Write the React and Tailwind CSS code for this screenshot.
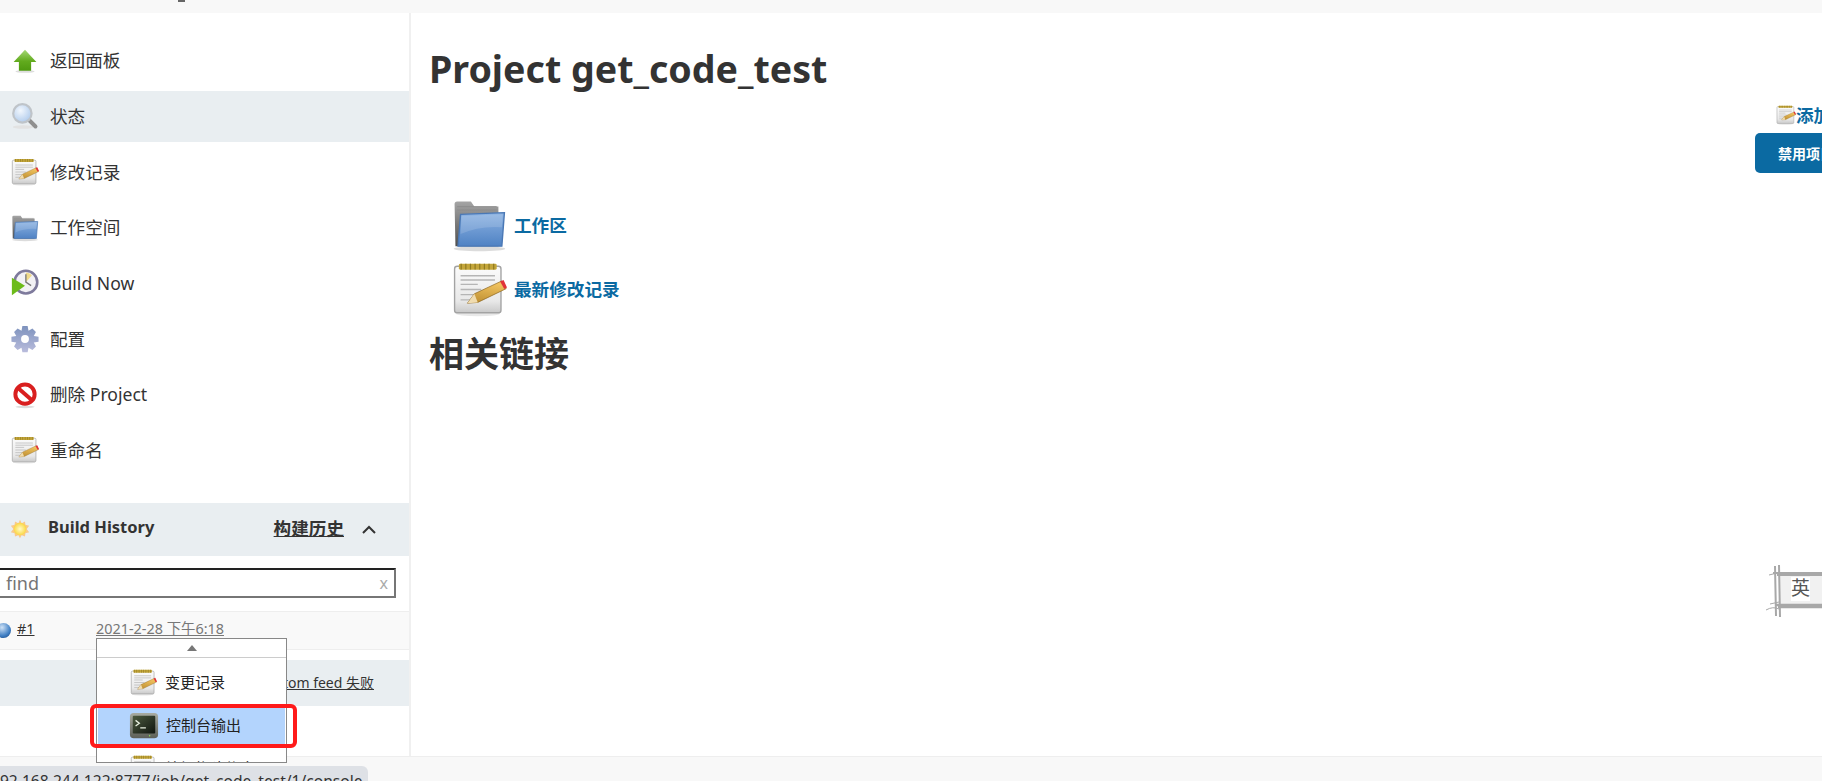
import React from "react";

const Defs = () => (
  <svg width="0" height="0" className="absolute">
    <defs>
      <linearGradient id="gArrow" x1="0" y1="0" x2="0" y2="1">
        <stop offset="0" stopColor="#a6d977" />
        <stop offset="0.55" stopColor="#62ab1e" />
        <stop offset="1" stopColor="#4f9a10" />
      </linearGradient>
      <radialGradient id="gLens" cx="0.4" cy="0.35" r="0.75">
        <stop offset="0" stopColor="#f2f7fd" />
        <stop offset="1" stopColor="#a9c6ea" />
      </radialGradient>
      <linearGradient id="gPaper" x1="0" y1="0" x2="0" y2="1">
        <stop offset="0" stopColor="#fbfbfb" />
        <stop offset="0.75" stopColor="#e8e8e8" />
        <stop offset="1" stopColor="#c9c9c9" />
      </linearGradient>
      <linearGradient id="gPencil" x1="0" y1="1" x2="0.3" y2="0">
        <stop offset="0" stopColor="#b98a2e" />
        <stop offset="1" stopColor="#f0c25e" />
      </linearGradient>
      <linearGradient id="gFolder" x1="0" y1="0" x2="0" y2="1">
        <stop offset="0" stopColor="#8db3e2" />
        <stop offset="1" stopColor="#4f82c4" />
      </linearGradient>
      <linearGradient id="gBack" x1="0" y1="0" x2="0" y2="1">
        <stop offset="0" stopColor="#a5a5a5" />
        <stop offset="1" stopColor="#4f4f4f" />
      </linearGradient>
      <linearGradient id="gGear" x1="0" y1="0" x2="0" y2="1">
        <stop offset="0" stopColor="#7d92bd" />
        <stop offset="1" stopColor="#b9bcdc" />
      </linearGradient>
      <radialGradient id="gSun" cx="0.5" cy="0.5" r="0.5">
        <stop offset="0" stopColor="#fffcc8" />
        <stop offset="1" stopColor="#fbd744" />
      </radialGradient>
      <linearGradient id="gTerm" x1="0" y1="0" x2="0" y2="1">
        <stop offset="0" stopColor="#a9aca2" />
        <stop offset="1" stopColor="#5d6058" />
      </linearGradient>
      <linearGradient id="gScreen" x1="0" y1="0" x2="1" y2="1">
        <stop offset="0" stopColor="#4c5a3f" />
        <stop offset="1" stopColor="#111610" />
      </linearGradient>
    </defs>
  </svg>
);

const UpArrow = ({ className }) => (
  <svg viewBox="0 0 32 32" className={className}>
    <ellipse cx="16" cy="28" rx="11" ry="1.5" fill="#ddd" />
    <path d="M16 3 L29 17 H23 V27 H9 V17 H3 Z" fill="url(#gArrow)" />
  </svg>
);

const Magnifier = ({ className }) => (
  <svg viewBox="0 0 32 32" className={className}>
    <ellipse cx="14" cy="28.5" rx="12" ry="2" fill="#e2e2e2" />
    <path d="M20 20 L28 28" stroke="#8f8f8f" strokeWidth="4.5" strokeLinecap="round" />
    <circle cx="13" cy="13" r="10.5" fill="url(#gLens)" stroke="#bfc4c9" strokeWidth="2.5" />
  </svg>
);

const Notepad = ({ className }) => (
  <svg viewBox="0 0 32 32" className={className}>
    <ellipse cx="15" cy="30" rx="13" ry="1.5" fill="#e8e8e8" />
    <rect x="1.5" y="2.5" width="27" height="27" rx="1.5" fill="url(#gPaper)" stroke="#a3a3a3" strokeWidth="0.8" />
    <rect x="4" y="1" width="22" height="3.5" rx="0.8" fill="#c4a63a" />
    <path d="M5 2.7 H25" stroke="#8f7a22" strokeWidth="3.4" strokeDasharray="0.7 2" />
    <path d="M5 8 H25 M5 10.5 H25 M5 13 H15 M5 16 H17 M5 19 H14 M5 22 H11" stroke="#b5b5b5" strokeWidth="0.8" />
    <path d="M9 24 L13 18.5 L29 11 L31.5 15.5 L15 23.5 Z" fill="url(#gPencil)" stroke="#8a6420" strokeWidth="0.4" />
    <path d="M9 24 L13 18.5 L15 23.5 Z" fill="#f0dcb0" />
    <path d="M28 11.4 L30 10.5 L32 14.8 L30.4 15.7 Z" fill="#e0343a" />
  </svg>
);

const Folder = ({ className }) => (
  <svg viewBox="0 0 32 32" className={className}>
    <ellipse cx="16" cy="29.5" rx="15" ry="1.5" fill="#dcdcdc" />
    <path d="M1.5 3.5 Q1.5 2 3 2 H11 L13 5 H27 V28 H2 Z" fill="url(#gBack)" />
    <path d="M3 5 H26 M3 7 H26" stroke="#8c8c8c" strokeWidth="0.5" />
    <path d="M5 9.5 L30.5 8.5 L29 28 H3.5 Z" fill="url(#gFolder)" stroke="#4a78b5" strokeWidth="0.8" />
    <path d="M5.5 10.5 L29.5 9.5 L29 17 Q16 16 5 21 Z" fill="#fff" opacity="0.14" />
  </svg>
);

const ClockPlay = ({ className }) => (
  <svg viewBox="0 0 32 32" className={className}>
    <circle cx="17" cy="15" r="13" fill="#f2f1f5" stroke="#7e7a9c" strokeWidth="3" />
    <path d="M17 4 A11 11 0 0 1 24 7 L17 15 Z" fill="#efd98a" />
    <path d="M17 6 L17 15 L23 19" stroke="#777" strokeWidth="1.5" fill="none" />
    <path d="M1 10 L16 19 L1 30 Z" fill="#6cbb1a" />
  </svg>
);

const Gear = ({ className }) => (
  <svg viewBox="0 0 32 32" className={className}>
    <path
      d="M13 1 H19 L20 6.5 L24.5 4 L28.5 8 L26 12.5 L31.5 13.5 V19 L26 20 L28.5 24.5 L24.5 28.5 L20 26 L19 31 H13 L12 26 L7.5 28.5 L3.5 24.5 L6 20 L0.5 19 V13.5 L6 12.5 L3.5 8 L7.5 4 L12 6.5 Z"
      fill="url(#gGear)"
    />
    <circle cx="16" cy="16" r="4.5" fill="#fff" />
  </svg>
);

const NoEntry = ({ className }) => (
  <svg viewBox="0 0 32 32" className={className}>
    <ellipse cx="16" cy="29.5" rx="11" ry="1.5" fill="#ddd" />
    <circle cx="16" cy="15" r="11" fill="#fff" stroke="#d91f1f" strokeWidth="4.5" />
    <path d="M8 8 L24 22" stroke="#d91f1f" strokeWidth="4.5" />
  </svg>
);

const Sun = ({ className }) => (
  <svg viewBox="0 0 24 24" className={className}>
    <path
      d="M12 1 L14 5 L18 3 L18.5 7 L23 8 L20 12 L23 16 L18.5 17 L18 21 L14 19.5 L12 23 L10 19.5 L6 21 L5.5 17 L1 16 L4 12 L1 8 L5.5 7 L6 3 L10 5 Z"
      fill="#f9c98a"
    />
    <circle cx="12" cy="12" r="7.5" fill="url(#gSun)" />
  </svg>
);

const Terminal = ({ className }) => (
  <svg viewBox="0 0 32 32" className={className}>
    <rect x="1" y="2" width="30" height="27" rx="4" fill="url(#gTerm)" />
    <rect x="4" y="5" width="24" height="19" rx="1" fill="url(#gScreen)" />
    <path d="M7 10 L11 13 L7 16 M12 18 H18" stroke="#e8f0e0" strokeWidth="1.4" fill="none" />
    <circle cx="22" cy="26.5" r="0.8" fill="#8fdc5a" />
  </svg>
);

const sideItems = [
  { Icon: UpArrow, label: "返回面板" },
  { Icon: Magnifier, label: "状态", active: true },
  { Icon: Notepad, label: "修改记录" },
  { Icon: Folder, label: "工作空间" },
  { Icon: ClockPlay, label: "Build Now" },
  { Icon: Gear, label: "配置" },
  { Icon: NoEntry, label: "删除 Project" },
  { Icon: Notepad, label: "重命名" },
];

const Sidebar = () => (
  <aside className="w-[411px] shrink-0 border-r-2 border-[#f0f0f0] pt-[22px]">
    <div className="flex flex-col gap-[4.7px]">
      {sideItems.map(({ Icon, label, active }) => (
        <div
          key={label}
          className={`flex h-[51px] items-center pl-[11px] text-[17.6px] text-[#333] ${active ? "bg-[#e9eef1]" : ""}`}
        >
          <Icon className="h-[28px] w-[28px] shrink-0" />
          <span className="ml-[11px]">{label}</span>
        </div>
      ))}
    </div>

    <div className="mt-[27px] flex h-[53px] items-center bg-[#e9eef1] pb-[3px] pl-[10px] text-[#333]">
      <Sun className="mt-[3px] h-[20px] w-[20px]" />
      <span className="ml-[18px] text-[16.5px] font-bold">Build History</span>
      <span className="ml-auto text-[17.6px] font-bold underline">构建历史</span>
      <svg viewBox="0 0 14 9" className="ml-[18px] mr-[33px] mt-[3px] h-[9px] w-[14px]">
        <path d="M1 8 L7 2 L13 8" stroke="#333" strokeWidth="2" fill="none" />
      </svg>
    </div>

    <div className="pt-[12px]">
      <div className="-ml-[2px] flex h-[30px] w-[398px] items-center border-2 border-[#767676] border-l-[#222] border-t-[#222] pl-[6px] pr-[6px] pt-[1px] text-[18px] text-[#757575]">
        <span>find</span>
        <span className="ml-auto text-[16px] text-[#aaa]">x</span>
      </div>
    </div>

    <div className="mt-[13px] flex h-[39px] items-center border-y border-[#eee] bg-[#f9f9f9] pb-[3px] text-[14.4px]">
      <span className="-ml-[4px] mt-[3px] h-[15px] w-[15px] shrink-0 rounded-full bg-[radial-gradient(circle_at_40%_30%,#cfe2f6,#3f7fc4_60%,#163f78)]" />
      <span className="ml-[6px] w-[79px] text-[#333] underline">#1</span>
      <span className="text-[#777] underline">2021-2-28 下午6:18</span>
    </div>

    <div className="mt-[10px] flex h-[46px] items-center justify-end bg-[#e9eef1] pr-[35px] text-[14px] text-[#333] underline">
      Atom feed 失败
    </div>
  </aside>
);

const Main = () => (
  <main className="min-w-0 flex-1 overflow-hidden pl-[18px] pt-[32px]">
    <h1 className="whitespace-nowrap text-[37.6px] leading-[48px] font-bold text-[#333]">Project get_code_test</h1>

    <div className="flex flex-col items-start pl-[1326px]">
      <div className="mt-[10px] flex h-[24px] items-center whitespace-nowrap pl-[21px] text-[17.6px] font-bold text-[#0b6aa2]">
        <Notepad className="h-[20px] w-[20px] shrink-0" />
        <span>添加说明</span>
      </div>
      <button className="mt-[6px] h-[40px] whitespace-nowrap rounded-[5px] bg-[#0b6aa2] px-[23px] text-[14px] font-bold text-white">
        禁用项目
      </button>
    </div>

    <div className="mt-[24px] flex h-[56px] items-center pl-[23px]">
      <Folder className="h-[55px] w-[55px]" />
      <a className="ml-[7px] text-[17.6px] font-bold text-[#0b6aa2]">工作区</a>
    </div>
    <div className="mt-[7px] flex h-[58px] items-center pl-[23px]">
      <Notepad className="h-[55px] w-[55px]" />
      <a className="ml-[7px] text-[17.6px] font-bold text-[#0b6aa2]">最新修改记录</a>
    </div>

    <h2 className="mt-[12px] text-[35px] leading-[48px] font-bold text-[#333]">相关链接</h2>
  </main>
);

const BuildMenu = () => (
  <div className="absolute left-[96px] top-[638px] h-[125px] w-[191px] overflow-hidden border border-[#888] bg-white text-[15px] text-[#222]">
    <div className="flex h-[19px] items-center justify-center border-b border-[#ccc]">
      <span className="h-0 w-0 border-x-[5px] border-b-[6px] border-x-transparent border-b-[#777]" />
    </div>
    <div className="flex h-[50px] items-center pb-[2px] pl-[33px]">
      <Notepad className="h-[27px] w-[27px]" />
      <span className="ml-[8px]">变更记录</span>
    </div>
    <div className="mx-px flex h-[37px] items-center bg-[#b3d4fd] pb-[2px] pl-[31px]">
      <Terminal className="h-[30px] w-[30px]" />
      <span className="ml-[7px]">控制台输出</span>
    </div>
    <div className="flex h-[47px] items-center pl-[33px]">
      <Notepad className="h-[27px] w-[27px]" />
      <span className="ml-[8px]">编辑构建信息</span>
    </div>
  </div>
);

const Watermark = () => (
  <div className="absolute left-[1765px] top-[562px] h-[60px] w-[57px] overflow-hidden">
    <svg viewBox="0 0 57 60" className="absolute inset-0 h-full w-full">
      <rect x="15" y="13" width="42" height="30" fill="#f1f1f1" />
      <rect x="26" y="15" width="19" height="24" fill="#fff" />
      <g stroke="#a8a8a8" fill="none">
        <path d="M10 4 L11 54 M14 3 L15 55" strokeWidth="2" />
        <path d="M8 11 H57 M12 13 H57" strokeWidth="2" />
        <path d="M10 43 H57 M13 45 H57" strokeWidth="2.5" />
        <path d="M1 48 Q8 44 14 47 M5 42 L14 40 M4 13 L12 11" strokeWidth="1" />
      </g>
    </svg>
    <span className="absolute left-[26px] top-[12px] text-[19px] text-[#555]">英</span>
  </div>
);

export default function App() {
  return (
    <div className="relative h-[781px] w-[1822px] overflow-hidden bg-white font-['Noto_Sans','Noto_Sans_CJK_SC',sans-serif]">
      <Defs />
      <div className="h-[13px] bg-[#f8f8f8] pl-[178px]">
        <div className="h-[2px] w-[7px] bg-[#666]" />
      </div>
      <div className="flex h-[768px]">
        <Sidebar />
        <Main />
      </div>

      <Watermark />

      <div className="absolute bottom-0 left-0 h-[25px] w-full border-t border-[#eee] bg-[#f8f8f8]" />
      <BuildMenu />
      <div className="absolute left-[90px] top-[704px] h-[44px] w-[207px] rounded-[6px] border-[4px] border-[#ff1a1a]" />
      <div className="absolute bottom-0 left-0 h-[15px] w-[368px] overflow-hidden rounded-tr-[6px] bg-[#dee1e6]">
        <div className="-ml-[9px] mt-[5px] whitespace-nowrap text-[15.6px] leading-[20px] text-[#333]">
          192.168.244.122:8777/job/get_code_test/1/console
        </div>
      </div>
    </div>
  );
}
